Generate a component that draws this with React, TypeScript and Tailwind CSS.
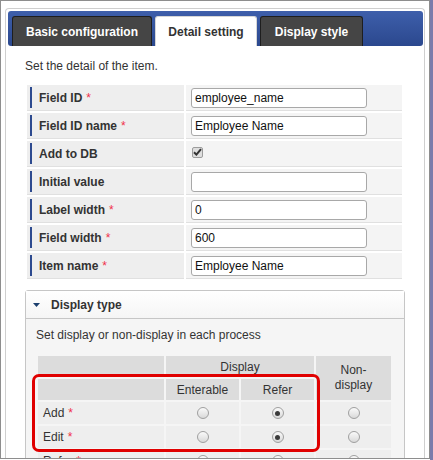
import React from "react";

type Field = {
  label: string;
  required: boolean;
  kind: "text" | "check";
  value?: string;
};

const fields: Field[] = [
  { label: "Field ID", required: true, kind: "text", value: "employee_name" },
  { label: "Field ID name", required: true, kind: "text", value: "Employee Name" },
  { label: "Add to DB", required: false, kind: "check" },
  { label: "Initial value", required: false, kind: "text", value: "" },
  { label: "Label width", required: true, kind: "text", value: "0" },
  { label: "Field width", required: true, kind: "text", value: "600" },
  { label: "Item name", required: true, kind: "text", value: "Employee Name" },
];

const processes = [
  { name: "Add", pick: 1 },
  { name: "Edit", pick: 1 },
  { name: "Refer", pick: 1 },
];

function Star() {
  return <span className="ml-[4px] text-[#f0304a] font-normal">*</span>;
}

function Radio({ checked }: { checked?: boolean }) {
  return (
    <span className="flex h-[12px] w-[12px] items-center justify-center rounded-full border border-[#9f9f9f] bg-linear-to-b from-[#fafafa] to-[#d9d9d9]">
      {checked && <span className="h-[5px] w-[5px] rounded-full bg-[#3a3a3a]" />}
    </span>
  );
}

function Tab({ label, active }: { label: string; active?: boolean }) {
  return (
    <div
      className={
        active
          ? "flex h-[30px] items-center justify-center rounded-t-[3px] border border-b-0 border-[#d6d6d6] bg-white text-[#333]"
          : "flex h-[30px] items-center justify-center rounded-t-[3px] border border-b-0 border-[#1e1e1e] bg-[#454545] text-white"
      }
    >
      <span className="text-[12px] font-bold">{label}</span>
    </div>
  );
}

export default function App() {
  return (
    <div className="relative flex h-[460px] w-[433px] overflow-hidden bg-white font-['Liberation_Sans',Arial,sans-serif]">
      <div className="h-[459px] w-[430px] overflow-hidden border border-[#8e8e8e]">
        <div className="ml-[4px] mt-[7px] h-[470px] w-[420px] rounded-t-[4px] border-x border-t border-[#cfcfcf] pl-[2px] pr-[1px] pt-[2px]">
          {/* tab bar */}
          <div className="flex h-[35px] items-end gap-[3px] rounded-[3px] bg-linear-to-b from-[#3e5fab] to-[#2b488e] pl-[4px]">
            <div className="w-[140px]">
              <Tab label="Basic configuration" />
            </div>
            <div className="w-[102px]">
              <Tab label="Detail setting" active />
            </div>
            <div className="w-[103px]">
              <Tab label="Display style" />
            </div>
          </div>

          <div className="pl-[17px]">
            <p className="mt-[12px] text-[12px] leading-[16px] text-[#333]">Set the detail of the item.</p>

            <div className="ml-[2px] mt-[11px] grid grid-cols-[157px_216px] gap-[2px]">
              {fields.map((f) => (
                <React.Fragment key={f.label}>
                  <div className="flex h-[26px] items-center border-b border-[#e0e0e0] bg-[#eeeeee]">
                    <span className="ml-[3px] h-[21px] w-[2px] bg-[#2d4a8f]" />
                    <span className="ml-[7px] text-[12px] font-bold text-[#333]">
                      {f.label}
                      {f.required && <Star />}
                    </span>
                  </div>
                  <div className="flex h-[26px] items-center border-b border-[#e0e0e0] bg-[#f4f4f4] pl-[5px]">
                    {f.kind === "text" ? (
                      <input
                        readOnly
                        value={f.value}
                        className="h-[20px] w-[176px] rounded-[3px] border border-[#a8a8a8] bg-white px-[3px] text-[12px] text-[#111] outline-none"
                      />
                    ) : (
                      <span className="mb-[3px] ml-[1px] flex h-[11px] w-[11px] items-center justify-center rounded-[2px] border border-[#9c9c9c] bg-[#dedede]">
                        <svg width="9" height="8" viewBox="0 0 9 8">
                          <path d="M1 4.2L3.4 6.6L8 1.2" fill="none" stroke="#333" strokeWidth="2" />
                        </svg>
                      </span>
                    )}
                  </div>
                </React.Fragment>
              ))}
            </div>

            {/* Display type panel */}
            <div className="mt-[11px] w-[380px] rounded-[3px] border border-[#c6c6c6] bg-[#f5f5f5]">
              <div className="flex h-[28px] items-center border-b border-[#c6c6c6] bg-linear-to-b from-white to-[#f5f5f5] pl-[7px]">
                <svg width="7" height="4" viewBox="0 0 7 4">
                  <path d="M0 0H7L3.5 4Z" fill="#1c3f6e" />
                </svg>
                <span className="ml-[11px] text-[12px] font-bold text-[#333]">Display type</span>
              </div>
              <div className="pl-[10px] pt-[8px]">
                <p className="text-[12px] leading-[16px] text-[#333]">Set display or non-display in each process</p>
                <div className="ml-[2px] mt-[13px] grid grid-cols-[126px_73px_73px_75px] grid-rows-[21px_21px_22px_22px_22px] gap-[2px] text-[12px] text-[#333]">
                  <div className="bg-[#dcdcdc]" />
                  <div className="col-span-2 flex items-center justify-center bg-[#dcdcdc]">Display</div>
                  <div className="row-span-2 flex items-center justify-center bg-[#dcdcdc] text-center leading-[15px]">
                    Non-
                    <br />
                    display
                  </div>
                  <div className="bg-[#dcdcdc]" />
                  <div className="flex items-center justify-center bg-[#dcdcdc]">Enterable</div>
                  <div className="flex items-center justify-center bg-[#dcdcdc]">Refer</div>
                  {processes.map((p) => (
                    <React.Fragment key={p.name}>
                      <div className="flex items-center bg-[#eeeeee] pl-[5px]">
                        {p.name}
                        <Star />
                      </div>
                      {[0, 1, 2].map((i) => (
                        <div key={i} className="flex items-center justify-center bg-[#eeeeee]">
                          <Radio checked={p.pick === i} />
                        </div>
                      ))}
                    </React.Fragment>
                  ))}
                </div>
              </div>
            </div>
          </div>
        </div>
      </div>
      <div className="h-full w-[3px] bg-[#7b7bab]" />

      {/* annotation */}
      <div className="pointer-events-none absolute left-[32px] top-[374px] h-[78px] w-[288px] rounded-[7px] border-[3px] border-[#e00000]" />
    </div>
  );
}
